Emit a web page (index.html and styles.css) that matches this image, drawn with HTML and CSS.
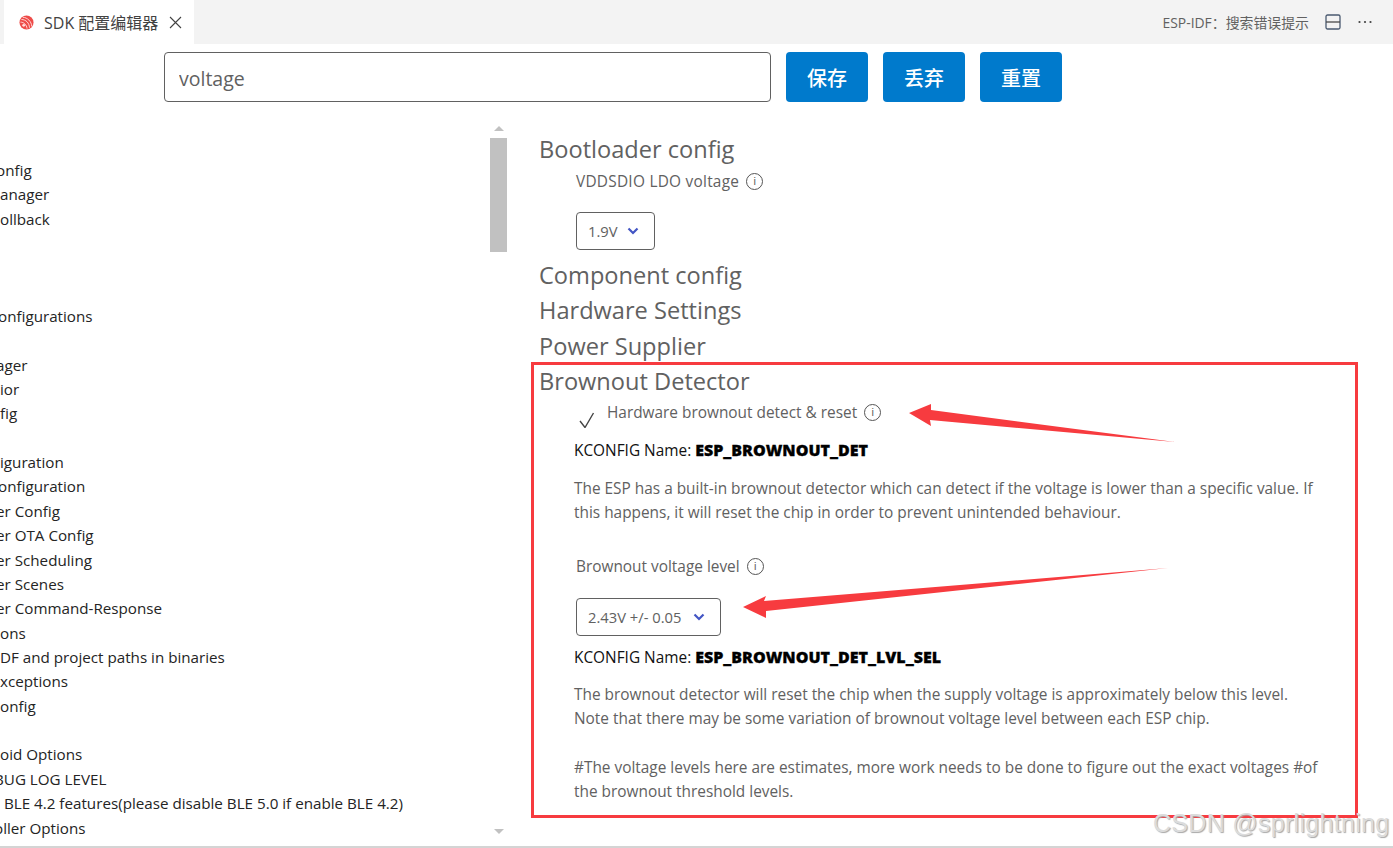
FILE: index.html
```html
<!DOCTYPE html>
<html lang="zh-CN">
<head>
  <meta charset="UTF-8">
  <title>SDK 配置编辑器</title>
  <link rel="stylesheet" href="styles.css">
</head>
<body>
  <div class="tabbar">
    <div class="tab">
      <svg class="logo" width="15" height="15" viewBox="0 0 16 16">
        <circle cx="8" cy="8" r="7.5" fill="#ee4b48"/>
        <g fill="none" stroke="#fdd" stroke-width="1">
          <path d="M4 2.400c5 .2 9.400 4.600 9.600 9.800"/>
          <path d="M2.600 4.800c4.800 0 8.400 3.800 8.600 8.800"/>
          <path d="M1.600 7.600c3.400 0 6.600 2.800 7 6.900"/>
        </g>
        <circle cx="5" cy="11" r="1.500" fill="#fdd"/>
      </svg>
      <span class="tab-title">SDK 配置编辑器</span>
      <svg class="tab-close" width="13" height="13" viewBox="0 0 13 13">
        <path d="M1 1l11 11M12 1L1 12" stroke="#424242" stroke-width="1.1" fill="none"/>
      </svg>
    </div>
    <div class="tab-actions">
      <span class="tab-action-text">ESP-IDF：搜索错误提示</span>
      <svg width="16" height="16" viewBox="0 0 16 16">
        <rect x="1" y="1" width="14" height="14" rx="1.500" fill="none" stroke="#4a5a70" stroke-width="1.300"/>
        <path d="M1 8h14" stroke="#4a4a4a" stroke-width="1.300"/>
      </svg>
      <svg width="16" height="16" viewBox="0 0 16 16" fill="#424242">
        <circle cx="2.500" cy="8" r="1.100"/>
        <circle cx="8" cy="8" r="1.100"/>
        <circle cx="13.500" cy="8" r="1.100"/>
      </svg>
    </div>
  </div>

  <div class="toolbar">
    <input class="search" type="text" value="voltage">
    <button class="btn">保存</button>
    <button class="btn">丢弃</button>
    <button class="btn">重置</button>
  </div>

  <div class="main">
    <div class="sidebar">
      <ul class="tree">
        <li class="cut">onfig</li>
        <li>anager</li>
        <li>ollback</li>
        <li></li>
        <li></li>
        <li></li>
        <li class="cut-small">onfigurations</li>
        <li></li>
        <li class="cut">ager</li>
        <li>ior</li>
        <li>fig</li>
        <li></li>
        <li>iguration</li>
        <li class="cut-small">onfiguration</li>
        <li class="cut">er Config</li>
        <li class="cut">er OTA Config</li>
        <li class="cut">er Scheduling</li>
        <li class="cut">er Scenes</li>
        <li class="cut">er Command-Response</li>
        <li>ons</li>
        <li>DF and project paths in binaries</li>
        <li>xceptions</li>
        <li>onfig</li>
        <li></li>
        <li>oid Options</li>
        <li class="cut-big">BUG LOG LEVEL</li>
        <li>&nbsp;BLE 4.2 features(please disable BLE 5.0 if enable BLE 4.2)</li>
        <li class="cut-big">oller Options</li>
      </ul>
      <div class="scrollbar">
        <div class="arrow-up"></div>
        <div class="thumb"></div>
        <div class="arrow-down"></div>
      </div>
    </div>

    <div class="content">
      <h2>Bootloader config</h2>
      <div class="field">
        <div class="label label-first">VDDSDIO LDO voltage <span class="info">i</span></div>
        <div class="select select-first">1.9V <svg class="chev" width="12" height="8" viewBox="0 0 12 8"><path d="M1.500 1.500L6 6l4.500-4.500" fill="none" stroke="#4355c4" stroke-width="2.200"/></svg></div>
      </div>
      <h2>Component config</h2>
      <h2>Hardware Settings</h2>
      <h2>Power Supplier</h2>
      <h2>Brownout Detector</h2>
      <div class="field">
        <div class="label check-row">
          <svg class="check" width="16" height="16" viewBox="0 0 16 16"><path d="M1 9l5 6.500L14.500 1" fill="none" stroke="#444" stroke-width="1.400"/></svg>
          Hardware brownout detect &amp; reset <span class="info">i</span>
        </div>
        <div class="kconfig">KCONFIG Name: <b>ESP_BROWNOUT_DET</b></div>
        <p class="desc desc-first">The ESP has a built-in brownout detector which can detect if the voltage is lower than a specific value. If<br>this happens, it will reset the chip in order to prevent unintended behaviour.</p>
      </div>
      <div class="field level">
        <div class="label">Brownout voltage level <span class="info">i</span></div>
        <div class="select select-level">2.43V +/- 0.05 <svg class="chev" width="12" height="8" viewBox="0 0 12 8"><path d="M1.500 1.500L6 6l4.500-4.500" fill="none" stroke="#4355c4" stroke-width="2.200"/></svg></div>
        <div class="kconfig kconfig-level">KCONFIG Name: <b>ESP_BROWNOUT_DET_LVL_SEL</b></div>
        <p class="desc">The brownout detector will reset the chip when the supply voltage is approximately below this level.<br>Note that there may be some variation of brownout voltage level between each ESP chip.<br><br>#The voltage levels here are estimates, more work needs to be done to figure out the exact voltages #of<br>the brownout threshold levels.</p>
      </div>
    </div>
  </div>

  <div class="redbox"></div>
  <svg class="arrows" width="1393" height="848" viewBox="0 0 1393 848">
    <polygon points="909,413 931,404 931,410 1175,442 930,420 931,426" fill="#f73b3f"/>
    <polygon points="743,607 766,596 764,601 1168,568 766,611 766,618" fill="#f73b3f"/>
  </svg>
  <div class="watermark">CSDN @sprlightning</div>
</body>
</html>
```

FILE: styles.css
```css
* {
  box-sizing: border-box;
}

html, body {
  margin: 0;
  height: 848px;
  overflow: hidden;
}

body {
  position: relative;
  font-family: "Open Sans", "Noto Sans CJK SC", sans-serif;
  font-size: 15.400px;
  color: #616161;
  background-color: #fff;
  border-bottom: 2px solid #d4d4d4;
}

.tabbar {
  display: flex;
  justify-content: space-between;
  align-items: center;
  height: 44px;
  padding-left: 4px;
  background-color: #f3f3f3;
}

.tab {
  display: flex;
  align-items: center;
  width: 190px;
  height: 44px;
  padding-left: 15px;
  background-color: #fff;
}

.tab-title {
  margin-left: 10px;
  font-size: 16px;
  color: #424242;
}

.tab-close {
  margin-left: 11px;
}

.tab-actions {
  display: flex;
  align-items: center;
  gap: 16px;
  padding-right: 20px;
}

.tab-action-text {
  font-size: 13.900px;
  color: #616161;
}

.toolbar {
  display: flex;
  gap: 15px;
  height: 58px;
  padding: 8px 0 0 164px;
}

.search {
  width: 607px;
  height: 50px;
  padding: 2px 14px 0;
  border: 1px solid #616161;
  border-radius: 4px;
  font-family: inherit;
  font-size: 19.500px;
  color: #616161;
}

.btn {
  width: 82px;
  height: 50px;
  border: none;
  border-radius: 4px;
  background-color: #007acc;
  color: #fff;
  font-family: "Noto Sans CJK SC", sans-serif;
  font-size: 20px;
  font-weight: 500;
}

.main {
  display: flex;
}

.sidebar {
  display: flex;
  flex: none;
  width: 531px;
  padding-right: 24px;
}

.tree {
  flex: 1;
  min-width: 0;
  margin: 0;
  padding: 55.800px 0 0;
  overflow: hidden;
  list-style: none;
  color: #242424;
  font-size: 15.200px;
  line-height: 24.370px;
  white-space: nowrap;
}

.tree li {
  height: 24.370px;
}

.tree .cut {
  margin-left: -4px;
}

.tree .cut-small {
  margin-left: -2px;
}

.tree .cut-big {
  margin-left: -6px;
}

.scrollbar {
  display: flex;
  flex-direction: column;
  align-items: center;
  flex: none;
  width: 17px;
  height: 744px;
  padding-top: 24px;
}

.arrow-up {
  width: 0;
  height: 0;
  border: 5px solid transparent;
  border-top: 0;
  border-bottom-color: #c1c1c1;
}

.thumb {
  width: 17px;
  height: 114px;
  margin-top: 7px;
  background-color: #c1c1c1;
}

.arrow-down {
  width: 0;
  height: 0;
  margin-top: auto;
  margin-bottom: 12px;
  border: 5px solid transparent;
  border-bottom: 0;
  border-top-color: #c1c1c1;
}

.content {
  flex: 1;
  padding: 29.500px 0 0 8px;
}

h2 {
  margin: 0;
  font-size: 23.600px;
  font-weight: 400;
  line-height: 35.400px;
  color: #616161;
}

.field {
  padding-left: 37px;
}

.label {
  display: flex;
  align-items: center;
  gap: 7px;
  height: 24px;
  margin-top: 1px;
  color: #616161;
}

.label-first {
  margin-top: 2.500px;
  letter-spacing: 0.250px;
}

.info {
  display: inline-block;
  width: 17px;
  height: 17px;
  border: 1.200px solid #555;
  border-radius: 50%;
  font-family: "Liberation Sans", sans-serif;
  font-size: 11px;
  line-height: 15px;
  letter-spacing: 0;
  text-align: center;
}

.check-row {
  margin-left: 3px;
}

.check {
  margin-top: 14px;
  margin-right: 5px;
}

.select {
  display: flex;
  align-items: center;
  justify-content: space-between;
  height: 38px;
  padding: 0 15px 0 11px;
  border: 1px solid #616161;
  border-radius: 4px;
  font-size: 14.750px;
  color: #616161;
}

.select-first {
  width: 79px;
  margin: 18.500px 0 8px;
}

.select-level {
  width: 145px;
  margin-top: 19.500px;
}

.kconfig {
  height: 24px;
  margin: 13.500px 0 0 -2px;
  line-height: 24px;
  color: #111;
}

.kconfig b {
  font-size: 16px;
  font-weight: 800;
  color: #000;
  -webkit-text-stroke: 0.300px #000;
}

.kconfig-level {
  margin-top: 9px;
}

.desc {
  margin: 14px 0 0 -2px;
  line-height: 24.300px;
  color: #616161;
}

.desc-first {
  margin-top: 14.500px;
}

.level {
  margin-top: 29.500px;
}

.redbox {
  position: absolute;
  left: 531px;
  top: 362px;
  width: 827px;
  height: 456px;
  border: 3px solid #f73b3f;
}

.arrows {
  position: absolute;
  left: 0;
  top: 0;
}

.watermark {
  position: absolute;
  left: 1153px;
  top: 809px;
  font-family: "Liberation Sans", sans-serif;
  font-size: 25px;
  letter-spacing: 0.300px;
  white-space: nowrap;
  color: #dcdcdc;
  text-shadow: 1px 1px 1px #a8a8a8;
}
```
